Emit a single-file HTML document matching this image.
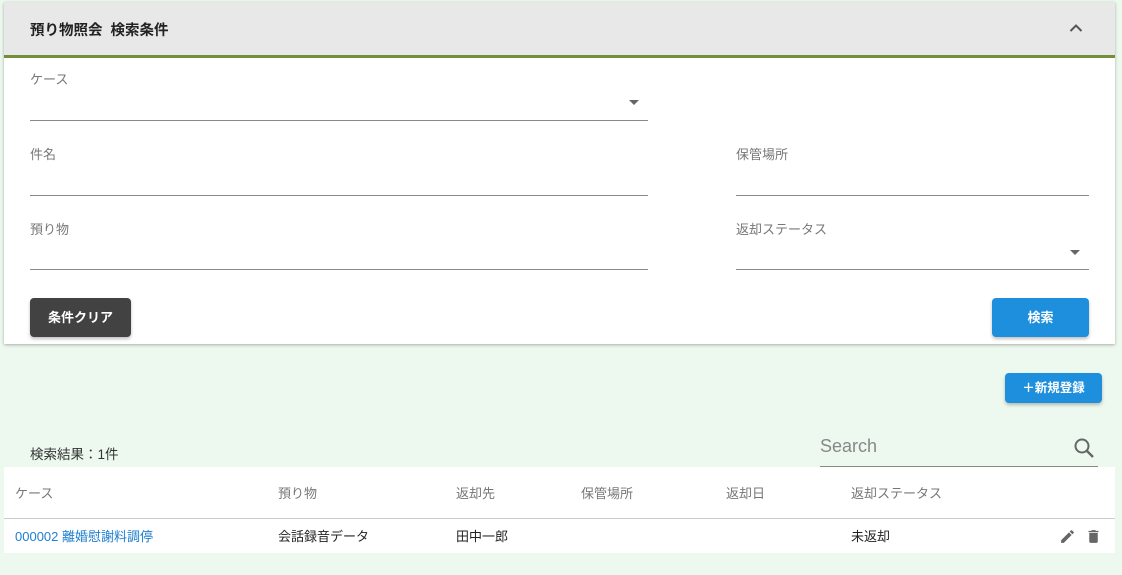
<!DOCTYPE html>
<html><head><meta charset="utf-8"><style>
*{box-sizing:border-box;margin:0;padding:0}
body{width:1122px;height:575px;background:#edf9ef;font-family:"Liberation Sans","Noto Sans CJK JP",sans-serif;position:relative;overflow:hidden}
.card{position:absolute;left:4px;top:2px;width:1111px;height:342px;background:#fff;box-shadow:0 1px 3px rgba(0,0,0,.3)}
.hdr{height:56px;background:#e8e8e8;border-bottom:3px solid #738f3c;position:relative}
.hdr span{position:absolute;left:26px;top:17px;font-size:14.5px;font-weight:bold;color:#222}
.chev{position:absolute;right:32px;top:21px}
.lbl{position:absolute;font-size:13px;color:#777}
.line{position:absolute;height:1px;background:#8a8a8a}
.tri{position:absolute;width:0;height:0;border-left:5px solid transparent;border-right:5px solid transparent;border-top:5px solid #666}
.btn{position:absolute;border-radius:4px;color:#fff;font-size:13px;font-weight:bold;text-align:center;box-shadow:0 2px 3px rgba(0,0,0,.25)}
.tbl{position:absolute;left:4px;top:467px;width:1111px;height:86px;background:#fff}
.th{position:absolute;top:16px;font-size:13px;color:#777}
.td{position:absolute;top:59px;font-size:13px;color:#222}
</style></head><body>
<div class="card">
<div class="hdr"><span>預り物照会&nbsp;&nbsp;検索条件</span>
<svg class="chev" width="14" height="10" viewBox="0 0 14 10"><path d="M1.5 8 L7 2.5 L12.5 8" fill="none" stroke="#555" stroke-width="2"/></svg></div>
<div class="lbl" style="left:26px;top:67px">ケース</div>
<div class="tri" style="left:625px;top:98px"></div>
<div class="line" style="left:26px;top:118px;width:618px"></div>
<div class="lbl" style="left:26px;top:142px">件名</div>
<div class="line" style="left:26px;top:193px;width:618px"></div>
<div class="lbl" style="left:732px;top:142px">保管場所</div>
<div class="line" style="left:732px;top:193px;width:353px"></div>
<div class="lbl" style="left:26px;top:217px">預り物</div>
<div class="line" style="left:26px;top:267px;width:618px"></div>
<div class="lbl" style="left:732px;top:217px">返却ステータス</div>
<div class="tri" style="left:1066px;top:248px"></div>
<div class="line" style="left:732px;top:267px;width:353px"></div>
<div class="btn" style="left:26px;top:296px;width:101px;height:39px;line-height:39px;background:#424242">条件クリア</div>
<div class="btn" style="left:988px;top:296px;width:97px;height:39px;line-height:39px;background:#1e8fdc">検索</div>
</div>
<div class="btn" style="left:1005px;top:373px;width:97px;height:30px;line-height:30px;background:#1e8fdc;font-size:12.5px">＋新規登録</div>
<div style="position:absolute;left:30px;top:443px;font-size:13.5px;color:#333">検索結果：1件</div>
<div style="position:absolute;left:820px;top:436px;font-size:18px;color:#888">Search</div>
<svg style="position:absolute;left:1073px;top:437px" width="22" height="22" viewBox="0 0 22 22"><circle cx="9" cy="9" r="6.5" fill="none" stroke="#666" stroke-width="2"/><path d="M13.5 13.5 L20 20" stroke="#666" stroke-width="2.4"/></svg>
<div class="line" style="left:820px;top:466px;width:278px"></div>
<div class="tbl">
<div class="th" style="left:11px">ケース</div>
<div class="th" style="left:274px">預り物</div>
<div class="th" style="left:452px">返却先</div>
<div class="th" style="left:577px">保管場所</div>
<div class="th" style="left:722px">返却日</div>
<div class="th" style="left:847px">返却ステータス</div>
<div style="position:absolute;left:0;top:51px;width:1111px;height:1px;background:#ccc"></div>
<div class="td" style="left:11px;color:#1e7fd0">000002 離婚慰謝料調停</div>
<div class="td" style="left:274px">会話録音データ</div>
<div class="td" style="left:452px">田中一郎</div>
<div class="td" style="left:847px">未返却</div>
<svg style="position:absolute;left:1055px;top:61px" width="17" height="17" viewBox="0 0 24 24"><path d="M3 17.25V21h3.75L17.81 9.94l-3.75-3.75L3 17.25zM20.71 7.04a1 1 0 000-1.41l-2.34-2.34a1 1 0 00-1.41 0l-1.83 1.83 3.75 3.75 1.83-1.83z" fill="#666"/></svg>
<svg style="position:absolute;left:1081px;top:61px" width="17" height="17" viewBox="0 0 24 24"><path d="M6 19c0 1.1.9 2 2 2h8c1.1 0 2-.9 2-2V7H6v12zM19 4h-3.5l-1-1h-5l-1 1H5v2h14V4z" fill="#666"/></svg>
</div>
</body></html>
